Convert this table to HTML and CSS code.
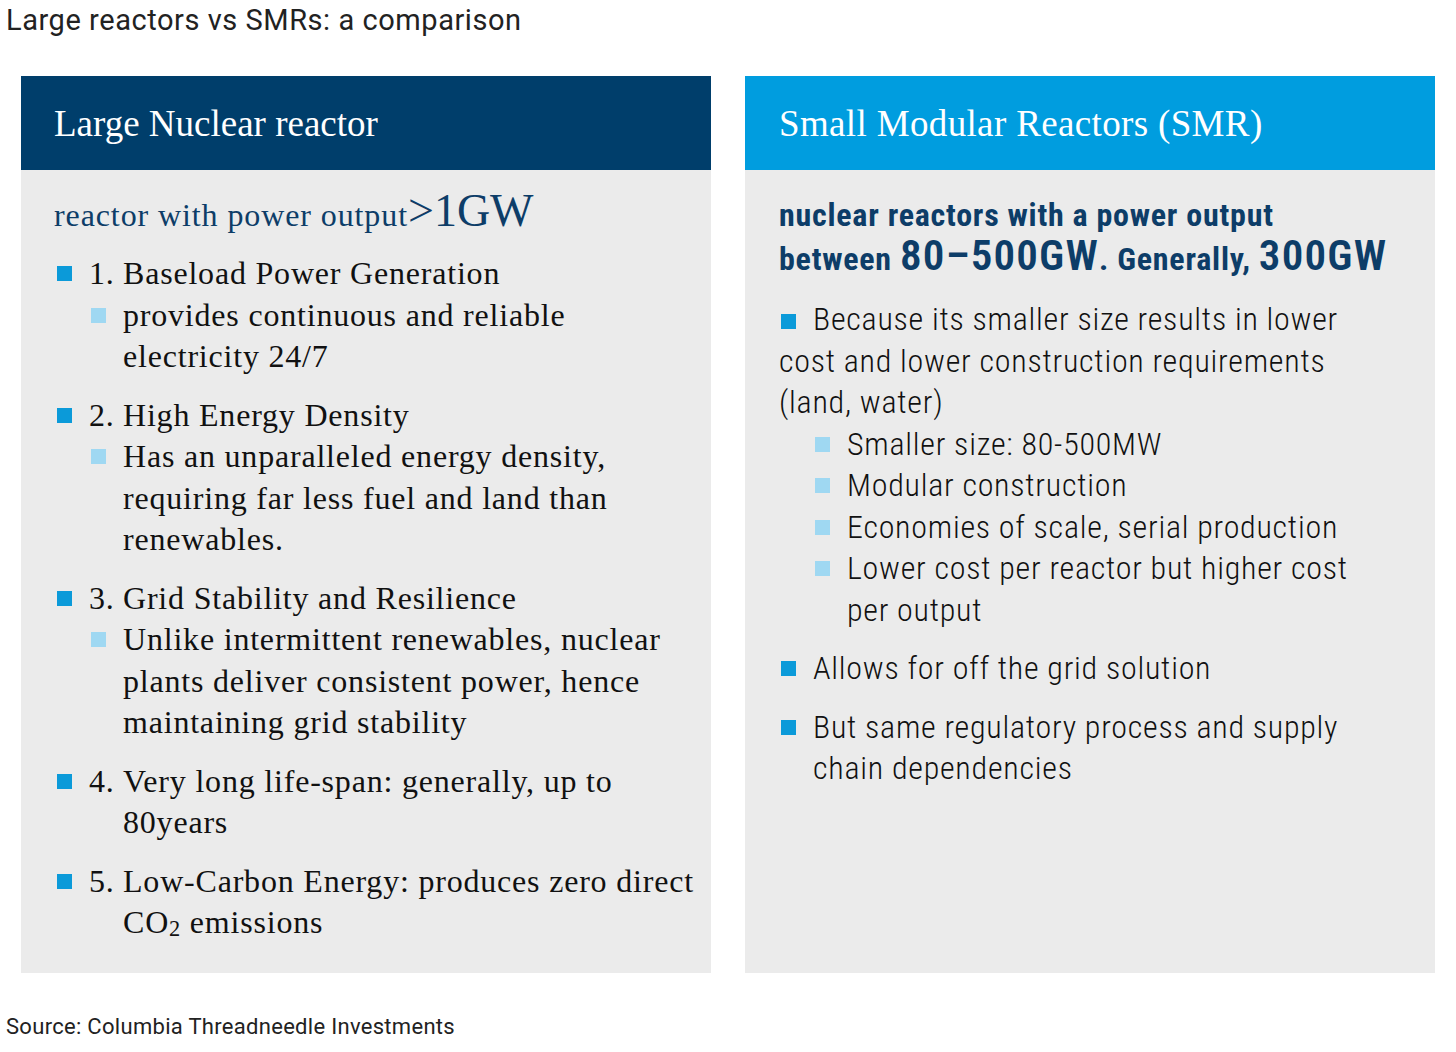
FILE: index.html
```html
<!DOCTYPE html>
<html lang="en">
<head>
<meta charset="utf-8">
<title>Large reactors vs SMRs: a comparison</title>
<link rel="stylesheet" href="styles.css">
</head>
<body>
<h1 class="title">Large reactors vs SMRs: a comparison</h1>
<div class="panels">
  <section class="panel">
    <div class="panel-head head-dark"><h2 class="head-text">Large Nuclear reactor</h2></div>
    <div class="panel-body body-left">
      <p class="intro-left">reactor with power output<span class="big-left">&gt;1GW</span></p>
      <ul class="list-left">
        <li class="item">
          <span class="mark"></span>
          <div class="item-content">
            <div class="num-row"><span class="num">1.</span><span>Baseload Power Generation</span></div>
            <div class="sub"><span class="mark mark-light"></span><span>provides continuous and reliable electricity 24/7</span></div>
          </div>
        </li>
        <li class="item">
          <span class="mark"></span>
          <div class="item-content">
            <div class="num-row"><span class="num">2.</span><span>High Energy Density</span></div>
            <div class="sub"><span class="mark mark-light"></span><span>Has an unparalleled energy density, requiring far less fuel and land than renewables.</span></div>
          </div>
        </li>
        <li class="item">
          <span class="mark"></span>
          <div class="item-content">
            <div class="num-row"><span class="num">3.</span><span>Grid Stability and Resilience</span></div>
            <div class="sub"><span class="mark mark-light"></span><span>Unlike intermittent renewables, nuclear plants deliver consistent power, hence maintaining grid stability</span></div>
          </div>
        </li>
        <li class="item">
          <span class="mark"></span>
          <div class="item-content">
            <div class="num-row"><span class="num">4.</span><span>Very long life-span: generally, up to 80years</span></div>
          </div>
        </li>
        <li class="item">
          <span class="mark"></span>
          <div class="item-content">
            <div class="num-row"><span class="num">5.</span><span>Low-Carbon Energy: produces zero direct CO<sub class="sub2">2</sub> emissions</span></div>
          </div>
        </li>
      </ul>
    </div>
  </section>
  <section class="panel">
    <div class="panel-head head-light"><h2 class="head-text head-text-right">Small Modular Reactors (SMR)</h2></div>
    <div class="panel-body body-right">
      <p class="intro-right">nuclear reactors with a power output<br>between <span class="big-right">80–500GW</span>. Generally, <span class="big-right">300GW</span></p>
      <ul class="list-right">
        <li class="ritem ritem-flow"><span class="mark mark-inline"></span>Because its smaller size results in lower cost and lower construction requirements (land, water)
          <ul class="rsub-list">
            <li class="rsub"><span class="mark mark-light"></span><span>Smaller size: 80-500MW</span></li>
            <li class="rsub"><span class="mark mark-light"></span><span>Modular construction</span></li>
            <li class="rsub"><span class="mark mark-light"></span><span>Economies of scale, serial production</span></li>
            <li class="rsub"><span class="mark mark-light"></span><span>Lower cost per reactor but higher cost per output</span></li>
          </ul>
        </li>
        <li class="ritem ritem-hang"><span class="mark"></span><span>Allows for off the grid solution</span></li>
        <li class="ritem ritem-hang"><span class="mark"></span><span>But same regulatory process and supply chain dependencies</span></li>
      </ul>
    </div>
  </section>
</div>
<p class="source">Source: Columbia Threadneedle Investments</p>
</body>
</html>
```
FILE: styles.css
```css
* { box-sizing: border-box; }
html, body { margin: 0; padding: 0; background: #ffffff; }
body { font-family: Roboto, "Liberation Sans", sans-serif; color: #111; }

.title {
  margin: 0;
  padding: 2px 0 0 6px;
  font-family: Roboto, "Liberation Sans", sans-serif;
  font-weight: 400;
  font-size: 29px;
  letter-spacing: 0.55px;
  line-height: 36px;
  color: #222;
}

.panels {
  display: grid;
  grid-template-columns: 690px 690px;
  column-gap: 34px;
  padding-left: 21px;
  margin-top: 38px;
}

.panel {
  background: #ebebeb;
  height: 897px;
}

.panel-head {
  height: 94px;
  display: flex;
  align-items: center;
  padding-left: 33px;
}
.head-dark { background: #003e6b; }
.head-light { background: #009ddf; padding-left: 34px; }

.head-text {
  margin: 0;
  font-family: "Liberation Serif", "Times New Roman", serif;
  font-weight: 400;
  font-size: 37px;
  line-height: 44px;
  color: #ffffff;
  padding-top: 2px;
}
.head-text-right { letter-spacing: 0.35px; }

.body-left { padding: 22px 11px 0 33px; }
.body-right { padding: 23px 58px 0 34px; }

/* Left panel */
.intro-left {
  margin: 0 0 15px 0;
  font-family: "Liberation Serif", "Times New Roman", serif;
  font-size: 32px;
  letter-spacing: 0.9px;
  line-height: 46px;
  color: #0d3d68;
}
.big-left { font-size: 46px; letter-spacing: 0; line-height: 30px; }

.list-left, .list-right, .rsub-list { list-style: none; margin: 0; padding: 0; }

.list-left {
  font-family: "Liberation Serif", "Times New Roman", serif;
  font-size: 32px;
  letter-spacing: 0.8px;
  line-height: 41.5px;
  color: #111;
}
.item { display: flex; align-items: flex-start; }
.item + .item { margin-top: 17px; }

.mark {
  flex: none;
  width: 15px;
  height: 15px;
  background: #0b9ad9;
  margin-top: 13px;
}
.list-left .item > .mark { margin-left: 3px; margin-right: 17px; }

.mark-light { background: #9fd8f2; }

.item-content { flex: 1; }
.num-row { display: flex; }
.num { flex: none; width: 34px; }
.sub { display: flex; align-items: flex-start; }
.sub .mark { margin-left: 2px; margin-right: 17px; }
.sub2 { font-size: 0.7em; vertical-align: -0.15em; line-height: 0; }

/* Right panel */
.intro-right {
  margin: 0 0 18px 0;
  font-family: Roboto, "Liberation Sans", sans-serif;
  font-stretch: 75%;
  font-weight: 700;
  font-size: 32px;
  letter-spacing: 0.75px;
  line-height: 44px;
  color: #0d3d68;
  white-space: nowrap;
}
.big-right { font-size: 43px; font-weight: 600; letter-spacing: 1.2px; line-height: 30px; }

.list-right {
  font-family: Roboto, "Liberation Sans", sans-serif;
  font-stretch: 75%;
  font-weight: 300;
  font-size: 32px;
  letter-spacing: 0.75px;
  line-height: 41.5px;
  color: #111;
}
.ritem + .ritem { margin-top: 17px; }
.mark-inline { display: inline-block; margin: 0 17px 0 2px; vertical-align: 1px; }
.rsub-list { padding-left: 36px; }
.rsub { display: flex; align-items: flex-start; }
.rsub .mark { margin-right: 17px; }
.ritem-hang { display: flex; align-items: flex-start; }
.ritem-hang .mark { margin-left: 2px; margin-right: 17px; }

.source {
  margin: 40px 0 0 6px;
  font-family: Roboto, "Liberation Sans", sans-serif;
  font-size: 22px;
  letter-spacing: 0.3px;
  line-height: 28px;
  color: #222;
}
```
